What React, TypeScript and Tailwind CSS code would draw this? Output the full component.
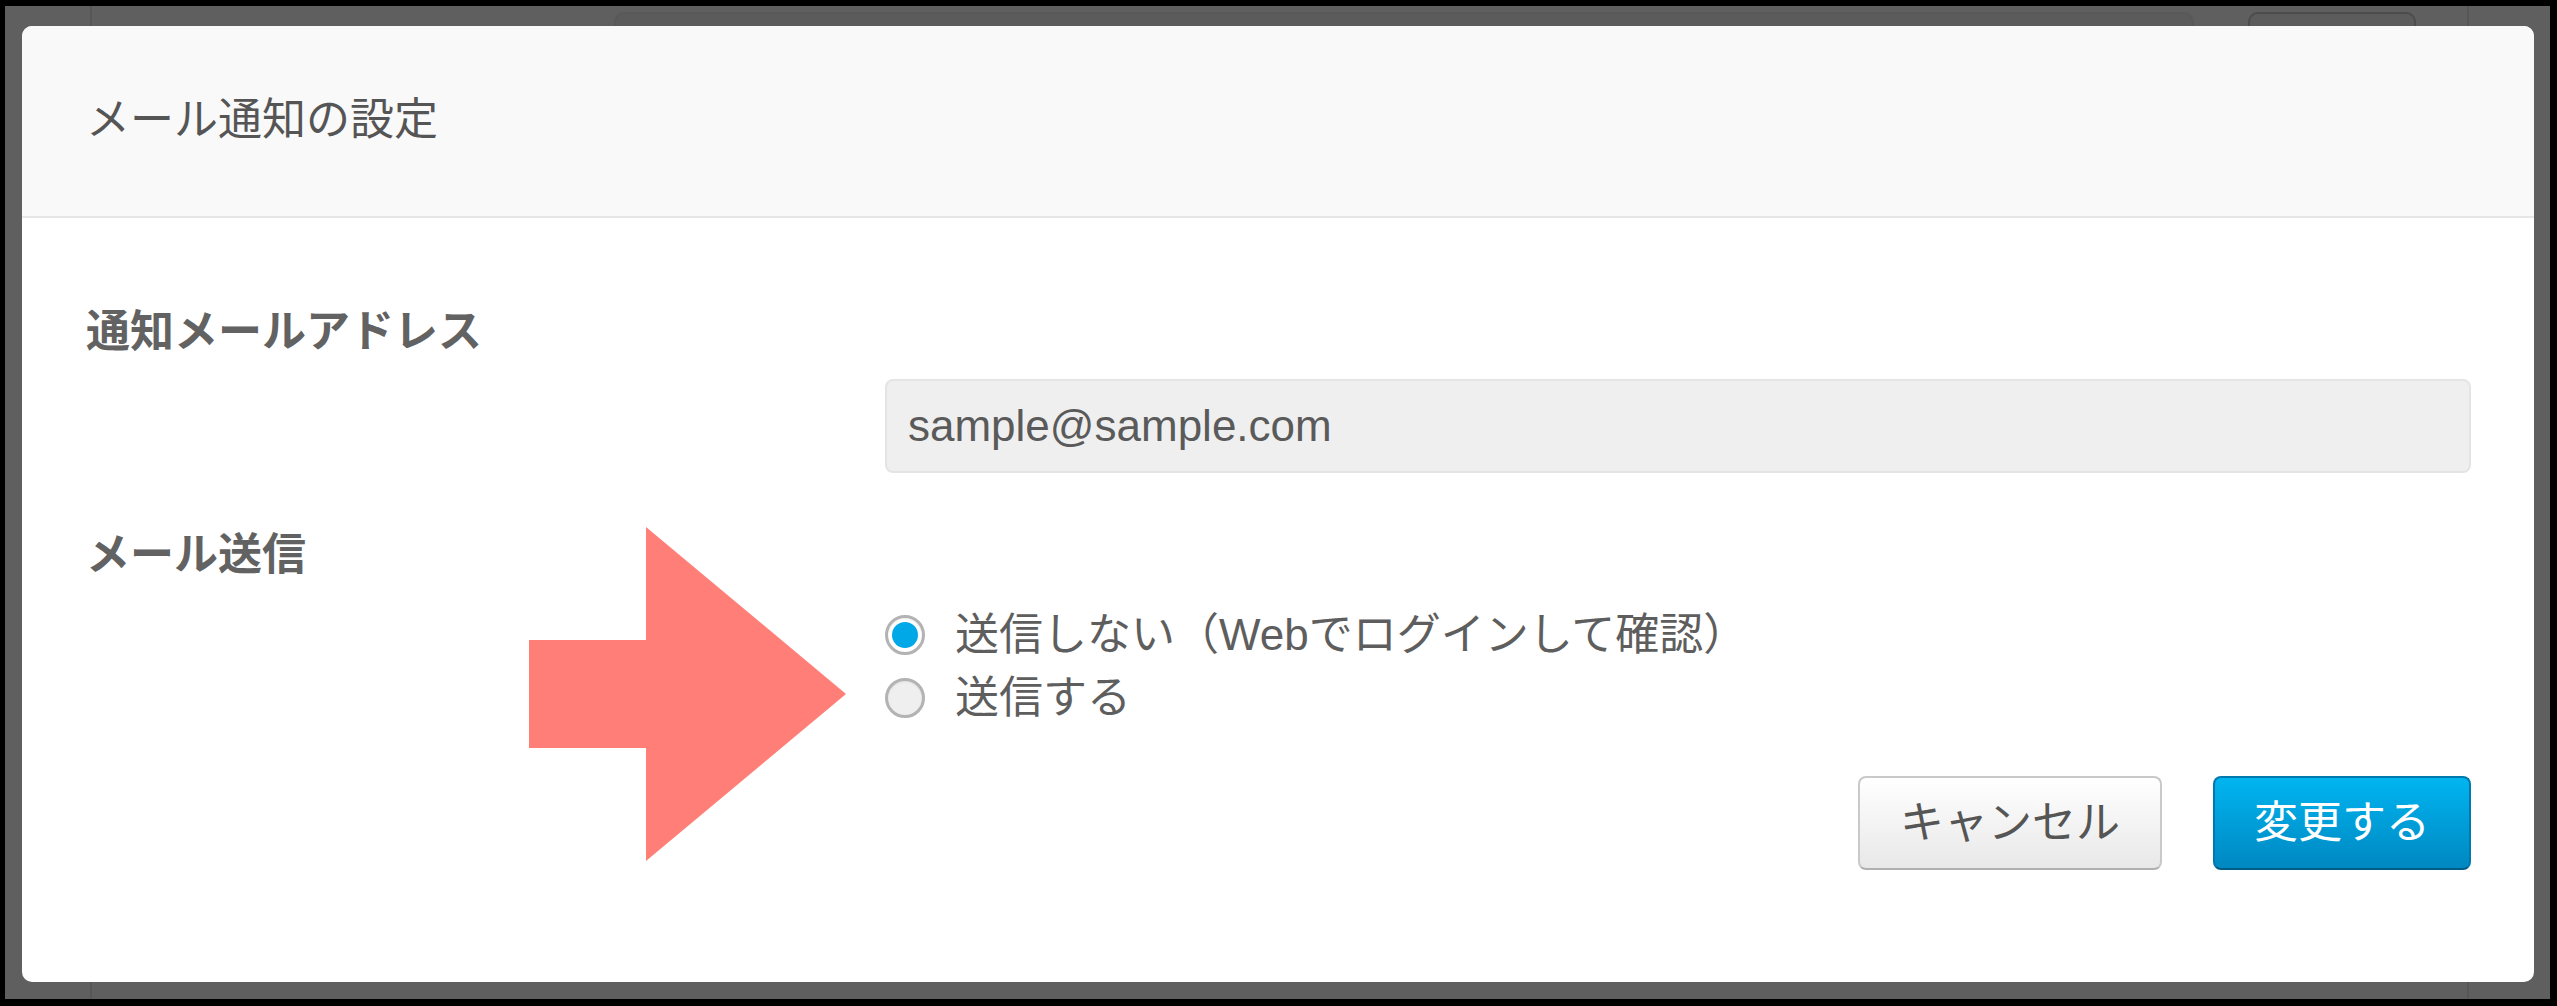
import { useState } from "react";

const font = { fontFamily: '"Liberation Sans", "Noto Sans CJK JP", sans-serif' };

function Radio({ checked, label, onSelect }: { checked: boolean; label: string; onSelect: () => void }) {
  return (
    <label className="flex h-[63px] cursor-pointer items-center" onClick={onSelect}>
      <span
        className={`grid h-[40px] w-[40px] shrink-0 place-items-center rounded-full border-[3px] border-[#b3b3b3] shadow-[inset_0_1px_2px_rgba(0,0,0,0.08)] ${
          checked ? "bg-white" : "bg-[#efefef]"
        }`}
      >
        {checked && <span className="h-[26px] w-[26px] rounded-full bg-[#00a8e8]" />}
      </span>
      <span className="ml-[30px] text-[44px] leading-[63px] text-[#5e5e5e]">{label}</span>
    </label>
  );
}

export default function App() {
  const [send, setSend] = useState(false);

  return (
    <div className="h-[1006px] w-[2557px] bg-black pb-[7px] pl-[5px] pr-[7px] pt-[6px]" style={font}>
      <div className="relative flex h-full flex-col bg-[#5f5f5f] pb-[17px] pl-[17px] pr-[16px] pt-[20px]">
        {/* page behind the backdrop */}
        <div className="absolute bottom-0 left-[85px] top-0 w-[2px] bg-[#575757]" />
        <div className="absolute bottom-0 left-[2462px] top-0 w-[2px] bg-[#575757]" />
        <div className="absolute left-[609px] top-[6px] h-[60px] w-[1580px] rounded-[10px] border-2 border-[#585858] bg-[#5b5b5b]" />
        <div className="absolute left-[2243px] top-[6px] h-[60px] w-[168px] rounded-[10px] border-2 border-[#4c4c4c] bg-[#5c5c5c]" />

        <div className="relative flex flex-1 flex-col overflow-hidden rounded-[10px] bg-white">
          <div className="flex h-[192px] items-center border-b-2 border-[#e6e6e6] bg-[#f9f9f9] px-[64px] pb-[4px]">
            <h3 className="text-[44px] leading-[63px] text-[#555]">メール通知の設定</h3>
          </div>

          <div className="flex flex-col pl-[64px] pr-[63px] pt-[82px]">
            <div className="text-[44px] font-bold leading-[63px] text-[#626262]">通知メールアドレス</div>
            <div className="ml-[799px] mt-[16px] flex h-[94px] items-center rounded-[8px] border-2 border-[#e4e4e4] bg-[#efefef] px-[21px] text-[44px] text-[#5a5a5a]">
              sample@sample.com
            </div>

            <div className="mt-[50px] text-[44px] font-bold leading-[63px] text-[#626262]">メール送信</div>
            <div className="ml-[799px] mt-[17px] flex flex-col">
              <Radio checked={!send} label="送信しない（Webでログインして確認）" onSelect={() => setSend(false)} />
              <Radio checked={send} label="送信する" onSelect={() => setSend(true)} />
            </div>

            <div className="mt-[47px] flex justify-end gap-[51px]">
              <button className="flex h-[94px] items-center rounded-[8px] border-2 border-[#c9c9c9] border-b-[#b0b0b0] bg-gradient-to-b from-white to-[#e8e8e8] px-[40px] text-[44px] text-[#555]">
                キャンセル
              </button>
              <button className="flex h-[94px] items-center rounded-[8px] border-2 border-[#0079ad] border-b-[#005d86] bg-gradient-to-b from-[#00b5f0] to-[#0088c2] px-[39px] text-[44px] text-white">
                変更する
              </button>
            </div>
          </div>
        </div>

        {/* annotation arrow */}
        <svg className="absolute left-[524px] top-[521px]" width="317" height="334" viewBox="0 0 317 334">
          <polygon points="0,113 117,113 117,0 317,167 117,334 117,221 0,221" fill="#ff7f78" />
        </svg>
      </div>
    </div>
  );
}
